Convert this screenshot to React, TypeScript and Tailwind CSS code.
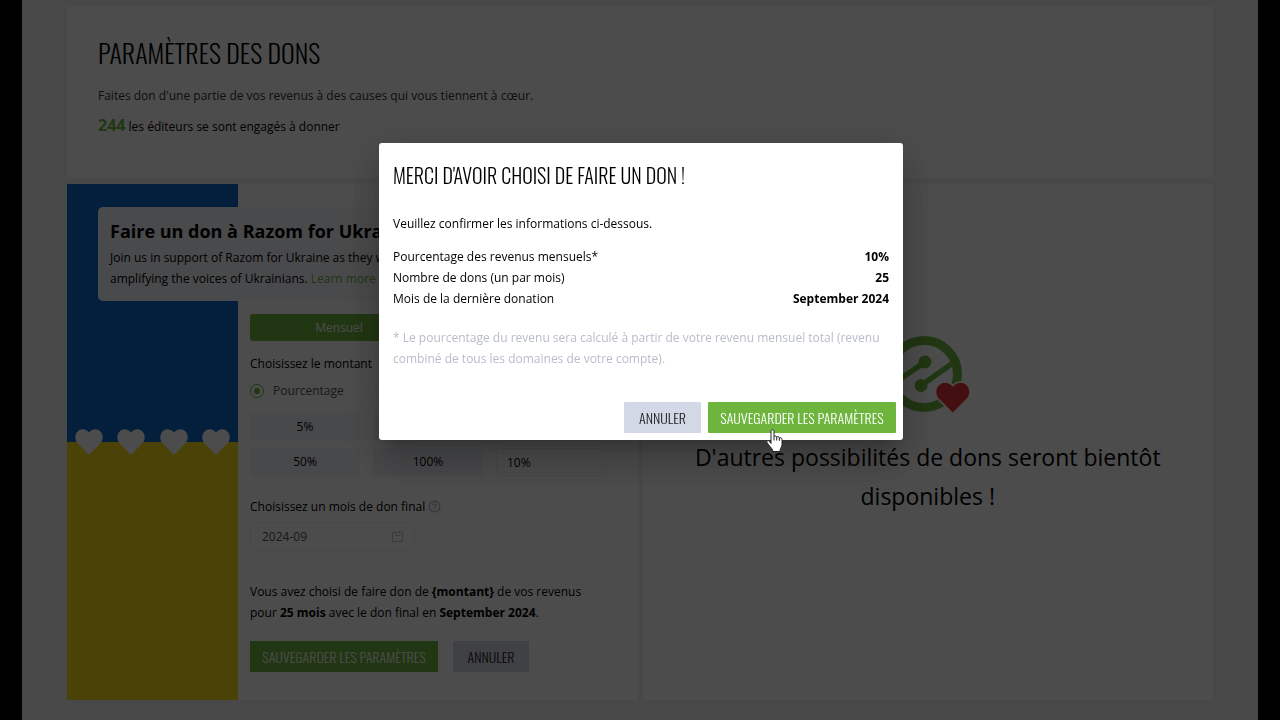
import React from "react";
import { CircleHelp } from "lucide-react";

interface SummaryRow {
  label: string;
  value: string;
}

const summary: SummaryRow[] = [
  { label: "Pourcentage des revenus mensuels*", value: "10%" },
  { label: "Nombre de dons (un par mois)", value: "25" },
  { label: "Mois de la dernière donation", value: "September 2024" },
];

const percentages = ["5%", "10%", "25%", "50%", "100%"];

const condensed = "font-['Oswald','Roboto_Condensed','Liberation_Sans_Narrow',sans-serif] font-light";

const HEART =
  "M14 26 L2.6 14.2 C-0.6 10.8 -0.4 5.4 2.6 2.4 C5.8 -0.8 10.6 -0.4 14 3.6 C17.4 -0.4 22.2 -0.8 25.4 2.4 C28.4 5.4 28.6 10.8 25.4 14.2 Z";

const Flag: React.FC = () => (
  <div className="col-start-1 row-span-2 row-start-1 flex items-center justify-between bg-linear-to-b from-[#0f68c5] from-50% to-[#f9dd16] to-50% px-2">
    {[0, 1, 2, 3].map((i) => (
      <svg key={i} width="28" height="26" viewBox="0 0 28 26" aria-hidden="true">
        <path d={HEART} fill="#fff" />
      </svg>
    ))}
  </div>
);

const CauseLogo: React.FC = () => (
  <svg width="84" height="77" viewBox="0 0 84 77" aria-hidden="true">
    <g stroke="#6eb53d" fill="none">
      <circle cx="38" cy="38" r="33.5" strokeWidth="9" />
      <path d="M39 26 L9 46.5 M35 49.5 L67 27" strokeWidth="5.5" />
    </g>
    <circle cx="39" cy="26" r="6.5" fill="#6eb53d" />
    <circle cx="35" cy="49.5" r="6.5" fill="#6eb53d" />
    <path
      d={HEART}
      transform="translate(50 46.5) scale(1.2 1.15)"
      fill="#e5353b"
      stroke="#fff"
      strokeWidth="3"
      paintOrder="stroke"
    />
  </svg>
);

const CalendarIcon: React.FC = () => (
  <svg className="shrink-0" width="11" height="11" viewBox="0 0 11 11" fill="none" stroke="#c4c4c8" aria-hidden="true">
    <path d="M.5 1.5 H10.5 V10.5 H.5 Z M2.5 4.5 H8.5 M3.5 0 V2.5 M7.5 0 V2.5" />
  </svg>
);

const Actions: React.FC = () => (
  <div className="mt-[18px] flex gap-[15px]">
    <button type="button" className={`${condensed} h-[31px] w-[188px] bg-[#6eb53d] text-sm whitespace-nowrap text-white`}>
      SAUVEGARDER LES PARAMÈTRES
    </button>
    <button type="button" className={`${condensed} h-[31px] w-[76px] bg-[#d5d9e6] text-sm text-[#222]`}>
      ANNULER
    </button>
  </div>
);

const DonationForm: React.FC = () => (
  <form className="col-start-2 row-start-2 ml-3 flex w-[356px] flex-col pt-[13px] pb-7">
    <div className="grid grid-cols-2">
      <button type="button" className="h-[27px] rounded-l-[3px] bg-[#6eb53d] text-white">
        Mensuel
      </button>
      <button type="button" aria-label="Unique" className="h-[27px] rounded-r-[3px] bg-[#eef0f6]" />
    </div>
    <p className="mt-3 leading-[21px]">Choisissez le montant</p>
    <div className="mt-[7px] flex h-5 items-center gap-5 text-[#555]">
      <label className="flex items-center gap-[9px]">
        <input
          type="radio"
          name="kind"
          defaultChecked
          className="h-[14px] w-[14px] appearance-none rounded-full border border-[#6eb53d] p-[3px] before:block before:h-[6px] before:w-[6px] before:rounded-full before:bg-[#6eb53d]"
        />
        Pourcentage
      </label>
      <input
        type="radio"
        name="kind"
        aria-label="Montant fixe"
        className="h-[14px] w-[14px] appearance-none rounded-full border border-[#f2f2f5]"
      />
    </div>
    <div className="mt-3 grid grid-cols-3 gap-x-[13px] gap-y-[7px]">
      {percentages.map((p) => (
        <button key={p} type="button" className="h-7 rounded-[3px] bg-[#f2f4f9]">
          {p}
        </button>
      ))}
      <input
        aria-label="Autre pourcentage"
        defaultValue="10%"
        className="h-7 w-full min-w-0 rounded-[3px] border border-[#eceef2] px-[10px]"
      />
    </div>
    <label htmlFor="month" className="mt-5 flex items-center gap-[3px] leading-[21px]">
      Choisissez un mois de don final
      <CircleHelp className="h-[13px] w-[13px] text-[#a9adc4]" strokeWidth={2} />
    </label>
    <div className="mt-[5px] flex h-[29px] w-[165px] items-center rounded-[3px] border border-[#eceef2] px-[11px]">
      <input id="month" defaultValue="2024-09" className="w-full min-w-0 text-[#555]" />
      <CalendarIcon />
    </div>
    <p className="mt-[30px] leading-[21px]">
      Vous avez choisi de faire don de <b>{"{montant}"}</b> de vos revenus pour <b>25 mois</b> avec le don final en{" "}
      <b>September 2024</b>.
    </p>
    <Actions />
  </form>
);

const ConfirmDialog: React.FC = () => (
  <div className="fixed inset-0 flex items-center justify-center bg-black/70 pb-[137px] pl-[2px]">
    <div
      role="dialog"
      aria-modal="true"
      aria-labelledby="dialog-title"
      className="relative w-[524px] rounded-[3px] bg-white shadow-[0_11px_15px_-7px_rgba(0,0,0,0.2),0_24px_38px_3px_rgba(0,0,0,0.14),0_9px_46px_8px_rgba(0,0,0,0.12)]"
    >
      <div className="px-[14px] pt-[18px]">
        <h2 id="dialog-title" className={`${condensed} text-xl leading-7`}>
          MERCI D'AVOIR CHOISI DE FAIRE UN DON !
        </h2>
        <p className="mt-6 leading-[21px]">Veuillez confirmer les informations ci-dessous.</p>
        <table className="mt-3 w-full">
          <tbody>
            {summary.map((row) => (
              <tr key={row.label} className="leading-[21px]">
                <th className="text-left font-normal">{row.label}</th>
                <td className="text-right font-bold">{row.value}</td>
              </tr>
            ))}
          </tbody>
        </table>
        <p className="mt-[18px] leading-[21px] text-[#b9bccb]">
          * Le pourcentage du revenu sera calculé à partir de votre revenu mensuel total (revenu combiné de tous les
          domaines de votre compte).
        </p>
      </div>
      <div className="mt-[33px] flex justify-end gap-[7px] px-[7px] pb-[7px]">
        <button className={`${condensed} h-[31px] w-[77px] rounded-[1px] bg-[#d3d8e6] text-sm text-[#222]`}>
          ANNULER
        </button>
        <button className={`${condensed} h-[31px] w-[188px] rounded-[1px] bg-[#6eb53d] text-sm whitespace-nowrap text-white`}>
          SAUVEGARDER LES PARAMÈTRES
        </button>
      </div>
      <svg
        className="absolute right-[120px] -bottom-[13px]"
        width="17"
        height="24"
        viewBox="0 0 17 24"
        aria-hidden="true"
      >
        <path
          d="M5 14.5 V2.4 C5 .3 8 .3 8 2.4 V7.6 C8.4 6.6 10.6 6.8 10.7 8.2 C11.2 7.3 13.3 7.6 13.4 9 C14 8.3 16 8.7 16 10.4 V15.5 C16 18 14.4 19 14.2 20.4 V22.5 H6.6 V21 C5.5 18.6 2.6 16.4 1 13.4 C.4 11.8 2.2 11 3.3 12.2 Z"
          fill="#fff"
          stroke="#222"
          strokeWidth="1"
          strokeLinejoin="round"
        />
        <path d="M8 7.5 V11.5 M10.7 8.2 V11.5 M13.4 9 V11.8" stroke="#222" strokeWidth="1" />
      </svg>
    </div>
  </div>
);

const App: React.FC = () => {
  return (
    <div className="min-h-screen bg-black px-[22px] font-['Open_Sans','Noto_Sans',sans-serif] text-xs text-black">
      <main className="min-h-screen bg-[#f0f2f5] px-[45px] pt-[6px] pb-5">
        <section className="bg-white px-[31px] pt-[25px] pb-[39px]">
          <h1 className={`${condensed} text-[26px] leading-[44px]`}>PARAMÈTRES DES DONS</h1>
          <p className="mt-[10px] leading-[21px] text-[#333]">
            Faites don d'une partie de vos revenus à des causes qui vous tiennent à cœur.
          </p>
          <p className="mt-[7px] leading-6">
            <span className="text-base font-bold text-[#6eb53d]">244</span> les éditeurs se sont engagés à donner
          </p>
        </section>

        <div className="mt-[6px] grid grid-cols-2 gap-[5px]">
          <section className="grid grid-cols-[171px_1fr] grid-rows-[auto_1fr] bg-white">
            <Flag />
            <div className="col-span-2 col-start-1 row-start-1 mt-[23px] mr-3 ml-[31px] rounded-[5px] bg-[#f6f7fa] px-3 pt-[10px] pb-3">
              <h2 className="text-lg leading-7 font-bold">Faire un don à Razom for Ukraine</h2>
              <p className="mt-[2px] leading-[21px]">
                Join us in support of Razom for Ukraine as they work
                <br />
                amplifying the voices of Ukrainians.{" "}
                <a href="#more" className="text-[#6eb53d]">
                  Learn more
                </a>
              </p>
            </div>
            <DonationForm />
          </section>

          <section className="flex flex-col items-center bg-white px-10 pt-[152px] text-center">
            <CauseLogo />
            <p className="mt-[25px] text-[23px] leading-[39px]">
              D'autres possibilités de dons seront bientôt disponibles !
            </p>
          </section>
        </div>
      </main>
      <ConfirmDialog />
    </div>
  );
};

export default App;
